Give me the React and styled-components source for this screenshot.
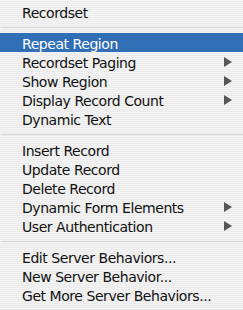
import React from 'react'
import styled, { createGlobalStyle } from 'styled-components'

const GlobalStyle = createGlobalStyle`
  html, body {
    margin: 0;
    padding: 0;
    background: #f0f0f0;
  }
`

const Menu = styled.div`
  width: 243px;
  height: 310px;
  box-sizing: border-box;
  padding: 2px 0 6px;
  display: flex;
  flex-direction: column;
  font-family: "DejaVu Sans", "Liberation Sans", sans-serif;
  font-size: 14px;
  color: #000;
  background: repeating-linear-gradient(
    to bottom,
    #f3f3f3 0px,
    #f3f3f3 1px,
    #ebebeb 1px,
    #ebebeb 2px
  );
  overflow: hidden;
`

const Item = styled.div`
  height: 19px;
  box-sizing: border-box;
  padding: 3px 11px 0 22px;
  line-height: 16px;
  display: flex;
  justify-content: space-between;
  white-space: nowrap;
  letter-spacing: -0.45px;
  color: ${(props) => (props.active ? '#fff' : '#111')};
  background: ${(props) => (props.active ? '#306eb6' : 'transparent')};
`

const Separator = styled.div`
  height: 12px;
  display: flex;
  align-items: center;
  padding-left: 1px;

  &::after {
    content: '';
    flex: 1;
    height: 1px;
    margin-top: 1px;
    background: #d6d6d6;
  }
`

const Arrow = styled.span`
  width: 0;
  height: 0;
  margin-top: 2px;
  border-top: 5px solid transparent;
  border-bottom: 5px solid transparent;
  border-left: 8px solid #555;
`

const sections = [
  [{ label: 'Recordset' }],
  [
    { label: 'Repeat Region', active: true },
    { label: 'Recordset Paging', sub: true },
    { label: 'Show Region', sub: true },
    { label: 'Display Record Count', sub: true },
    { label: 'Dynamic Text' },
  ],
  [
    { label: 'Insert Record' },
    { label: 'Update Record' },
    { label: 'Delete Record' },
    { label: 'Dynamic Form Elements', sub: true },
    { label: 'User Authentication', sub: true },
  ],
  [
    { label: 'Edit Server Behaviors...' },
    { label: 'New Server Behavior...' },
    { label: 'Get More Server Behaviors...' },
  ],
]

export default function App() {
  return (
    <>
      <GlobalStyle />
      <Menu>
        {sections.map((items, i) => (
          <React.Fragment key={i}>
            {i > 0 && <Separator />}
            {items.map((it) => (
              <Item key={it.label} active={it.active}>
                <span>{it.label}</span>
                {it.sub && <Arrow />}
              </Item>
            ))}
          </React.Fragment>
        ))}
      </Menu>
    </>
  )
}
